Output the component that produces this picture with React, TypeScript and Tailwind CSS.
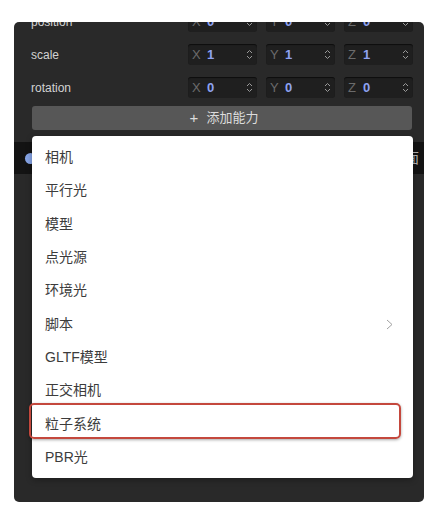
import React from "react";

const cjk = { fontFamily: '"Liberation Sans", "Noto Sans CJK SC", sans-serif' };

function Spinner() {
  return (
    <svg width="7" height="11" viewBox="0 0 7 11" className="shrink-0">
      <polyline points="1,4 3.5,1.5 6,4" fill="none" stroke="#9a9a9a" strokeWidth="1" />
      <polyline points="1,7 3.5,9.5 6,7" fill="none" stroke="#9a9a9a" strokeWidth="1" />
    </svg>
  );
}

function AxisInput({ axis, value }: { axis: string; value: string }) {
  return (
    <div className="flex h-[21px] w-[69px] items-center rounded-[3px] bg-[#1f1f1f] pl-[4px] pr-[4px] text-[13px] shadow-[inset_0_1px_1px_rgba(0,0,0,0.6)]">
      <span className="w-[15px] text-[#6b6b6b]">{axis}</span>
      <span className="flex-1 font-semibold text-[#8ea2f0]">{value}</span>
      <Spinner />
    </div>
  );
}

function VecRow({ label, values }: { label: string; values: string[] }) {
  return (
    <div className="flex h-[33px] items-center">
      <div className="w-[158px] text-[12px] text-[#d2d2d2]">{label}</div>
      <div className="flex gap-[9px]">
        <AxisInput axis="X" value={values[0]} />
        <AxisInput axis="Y" value={values[1]} />
        <AxisInput axis="Z" value={values[2]} />
      </div>
    </div>
  );
}

const items = ["相机", "平行光", "模型", "点光源", "环境光", "脚本", "GLTF模型", "正交相机", "粒子系统", "PBR光"];

export default function App() {
  return (
    <div className="min-h-[518px] bg-white pt-[22px]" style={cjk}>
      <div className="relative mx-[14px] h-[480px] overflow-hidden rounded-[5px] bg-[#292929]">
        <div className="-mt-[17px] pl-[17px] pr-[11px]">
          <VecRow label="position" values={["0", "0", "0"]} />
          <VecRow label="scale" values={["1", "1", "1"]} />
          <VecRow label="rotation" values={["0", "0", "0"]} />
        </div>
        <div className="ml-[18px] mr-[12px] mt-[2px] flex h-[24px] items-center justify-center gap-[8px] rounded-[3px] bg-[#575757] pl-[4px] text-[13px] text-[#dcdcdc]">
          <span className="text-[15px] font-light">+</span>
          <span>添加能力</span>
        </div>
        <div className="mt-[12px] flex h-[32px] items-center justify-between bg-[#131313] pl-[11px] pr-[5px]">
          <span className="h-[11px] w-[11px] rounded-full bg-[#86a4e6]" />
          <span className="text-[14px] text-[#b5b5b5]">页面</span>
        </div>

        <div className="absolute left-[18px] top-[114px] w-[381px] rounded-[4px] bg-white pb-[4px] pt-[5px] shadow-[0_2px_6px_rgba(0,0,0,0.3)]">
          {items.map((name) => (
            <div key={name} className="relative flex h-[33.3px] items-center justify-between pl-[13px] pr-[20px] text-[14px] text-[#3c3c3c]">
              <span>{name}</span>
              {name === "脚本" && (
                <svg width="7" height="11" viewBox="0 0 7 11">
                  <polyline points="1,1 6,5.5 1,10" fill="none" stroke="#a0a0a0" strokeWidth="1" />
                </svg>
              )}
              {name === "粒子系统" && (
                <span className="absolute -left-[3px] right-[12px] -top-[4px] h-[36px] rounded-[5px] border-2 border-[#c4483d] shadow-[0_1px_3px_rgba(0,0,0,0.35)]" />
              )}
            </div>
          ))}
        </div>
      </div>
    </div>
  );
}
